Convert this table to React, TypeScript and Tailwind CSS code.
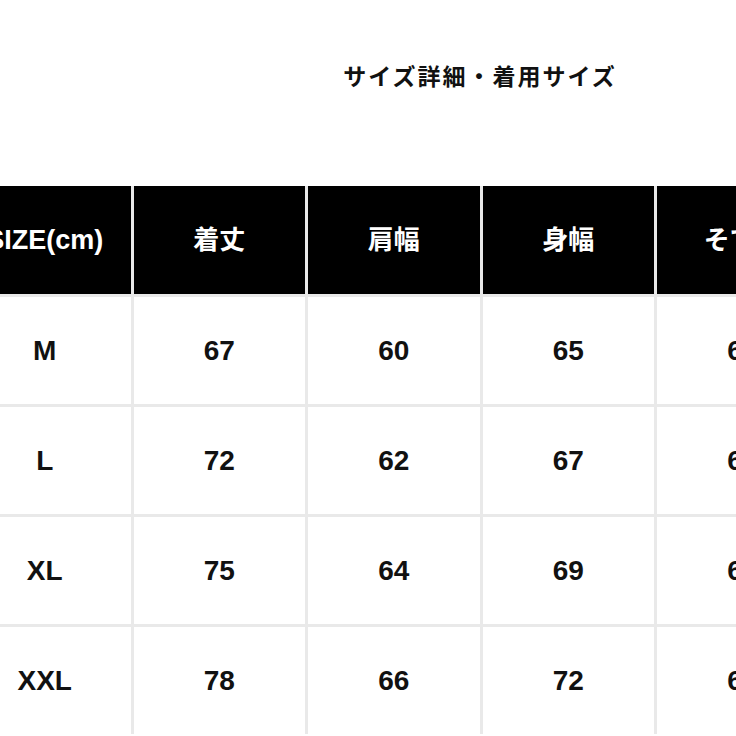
import React from "react";

const headers = ["SIZE(cm)", "着丈", "肩幅", "身幅", "そで丈"];
const rows = [
  ["M", "67", "60", "65", "62"],
  ["L", "72", "62", "67", "63"],
  ["XL", "75", "64", "69", "64"],
  ["XXL", "78", "66", "72", "65"],
];

export default function App() {
  return (
    <div
      className="w-[736px] h-[736px] overflow-hidden bg-white"
      style={{ fontFamily: '"Liberation Sans", "Noto Sans CJK JP", sans-serif' }}
    >
      <div className="h-[186px] pt-[61px]">
        <div className="ml-[338px] w-[284px] text-center text-[23px] leading-[32px] font-bold tracking-[2px] text-[#111]">
          サイズ詳細・着用サイズ
        </div>
      </div>
      <div className="ml-[-41px] w-[880px] grid grid-cols-[repeat(5,171.5px)] grid-rows-[108px_repeat(4,107px)] gap-[3px] bg-[#e9e9e9]">
        {headers.map((h, i) => (
          <div
            key={h}
            className={
              "bg-black text-white flex items-center justify-center font-bold " +
              (i === 0 ? "text-[27px]" : "text-[26px]")
            }
          >
            {h}
          </div>
        ))}
        {rows.map((r) =>
          r.map((c, i) => (
            <div
              key={r[0] + i}
              className="bg-white text-[#111] flex items-center justify-center text-[28px] font-bold"
            >
              {c}
            </div>
          ))
        )}
      </div>
    </div>
  );
}
